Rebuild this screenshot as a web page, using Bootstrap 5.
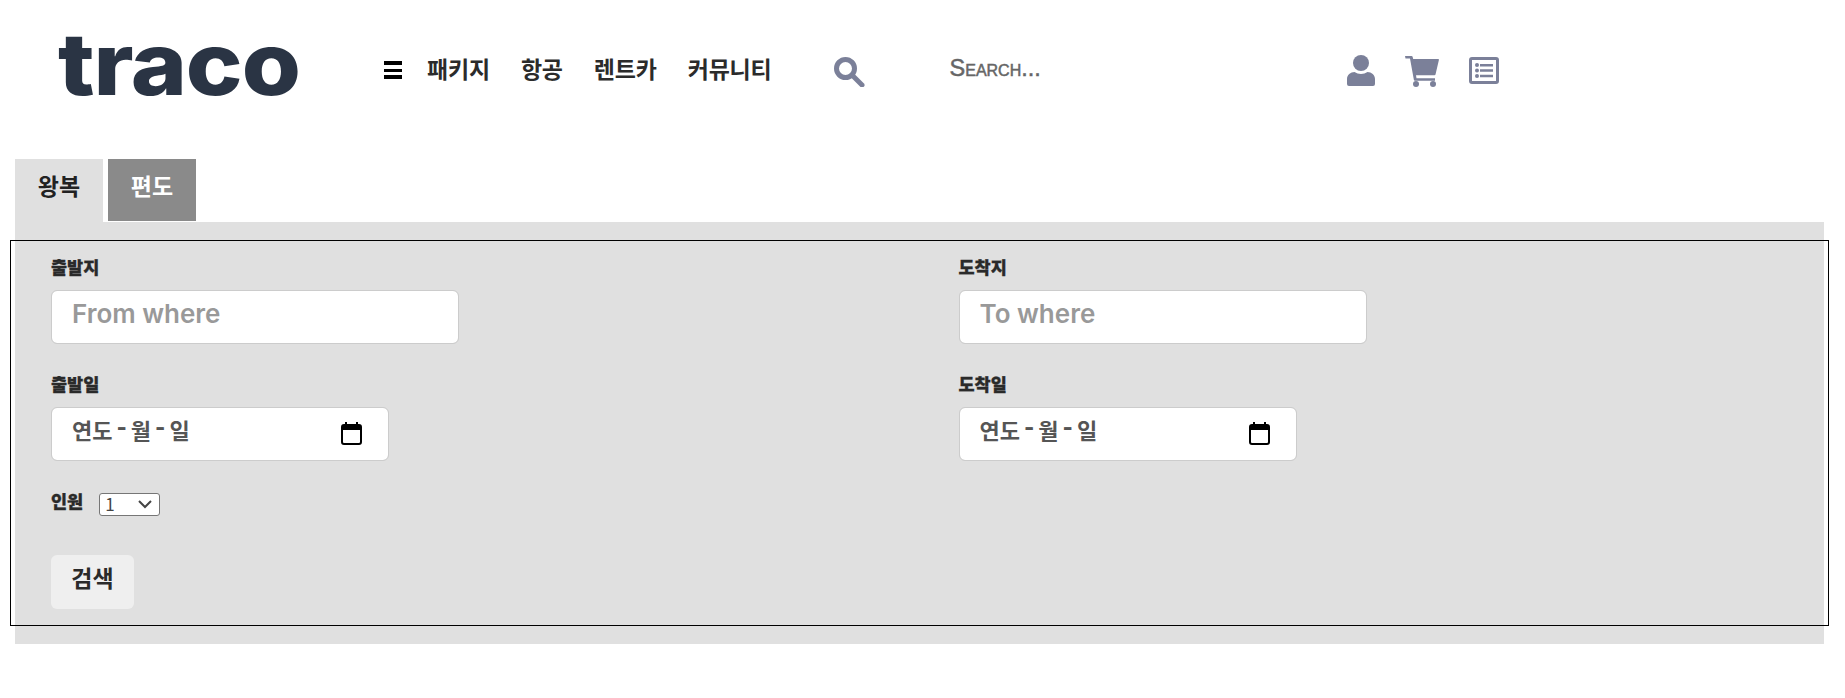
<!DOCTYPE html>
<html lang="ko">
<head>
    <title>traco</title>
    <link href="https://cdn.jsdelivr.net/npm/bootstrap@5.3.3/dist/css/bootstrap.min.css" rel="stylesheet">
    <style>
        body { font-family: "Noto Sans CJK KR", "Noto Sans", sans-serif; color: #222; background: #fff; overflow-x: hidden; }

        /* header */
        .top-bar { height: 140px; padding-left: 58px; }
        .brand-logo { width: 326px; font-family: Inter, sans-serif; font-weight: 800; font-size: 87px; line-height: 1; letter-spacing: -1px; color: #2a3444; text-decoration: none; position: relative; top: -7px; transform: scaleX(1.1); transform-origin: left center; }
        .menu-bars { width: 18px; height: 18px; margin-right: 25px; border-top: 4px solid #000; border-bottom: 4px solid #000; }
        .menu-bars::after { content: ""; display: block; height: 3px; margin-top: 3.5px; background: #000; }
        .menu-link { position: relative; top: -2px; font-size: 23px; font-weight: 700; line-height: 1; color: #2b2b2b; text-decoration: none; margin-right: 31px; letter-spacing: -.2px; }
        .menu-link.last { margin-right: 62px; }
        .find-icon { position: relative; top: 2px; }
        .search-text { position: relative; top: -1px; width: 397px; margin-left: 85px; font-family: "Liberation Sans", sans-serif; font-size: 23.5px; font-variant: small-caps; color: #666; -webkit-text-stroke: .5px #666; }
        .icon-tint { fill: #7b8099; }
        .cart-icon { position: relative; top: 1px; margin-left: 30px; }
        .list-icon { margin-left: 30px; }

        /* tabs */
        .tab-row { margin: 19px 0 0 15px; gap: 5px; }
        .tab-item { width: 88px; height: 62px; padding: 3px 0 0; border: 0; border-radius: 0; font-size: 23px; font-weight: 700; line-height: 1.4; text-align: center; }
        .tab-item.btn { display: block; }
        .tab-item.on { height: 63px; padding-bottom: 13px; background: #e0e0e0; color: #222; }
        .tab-item.off { padding-bottom: 12px; background: #8a8a8a; color: #fff; }

        /* search panel */
        .search-panel { margin: 0 21px 0 15px; padding: 18px 0; background: #e0e0e0; }
        .search-form { margin: 0 -5px; padding: 14px 0 16px; border: 1px solid #000; }
        .field-label { display: block; margin-bottom: 11px; font-size: 17.5px; font-weight: 900; line-height: 24px; color: #2a2a2a; -webkit-text-stroke: .3px #2a2a2a; }
        .place-input.form-control { width: 408px; height: 54px; padding: 0 20px 7px; border: 1px solid #ccc; border-radius: 6px; font-family: Inter, sans-serif; font-size: 26px; font-weight: 600; }
        .place-input.form-control::placeholder { color: #999; opacity: 1; }
        .date-box.form-control { width: 338px; height: 54px; margin-bottom: 30px; padding: 0 26px 0 20px; border: 1px solid #ccc; border-radius: 6px; font-size: 22px; font-weight: 700; color: #555; }
        .date-box span { position: relative; top: -4px; }
        .date-box svg { position: relative; top: -1px; }
        .date-dash { padding: 0 4px; font-family: Inter, sans-serif; font-weight: 800; }
        .place-gap { margin-bottom: 28px; }
        .field-shift { margin-left: -1px; }
        .people-row { height: 24px; gap: 16px; }
        .people-row .field-label { margin: -2px 0 0; }
        .people-select { width: 61px; height: 23px; margin-top: 2px; padding: 0 0 2px 5px; appearance: none; border: 1px solid #767676; border-radius: 3px; background: #fff url("data:image/svg+xml,%3Csvg xmlns='http://www.w3.org/2000/svg' width='14' height='9'%3E%3Cpath d='M1 1l6 6 6-6' fill='none' stroke='%23444' stroke-width='2'/%3E%3C/svg%3E") no-repeat right 7px center; color: #444; font-family: "Noto Sans CJK KR", sans-serif; font-size: 17px; line-height: 1; }
        .go-btn.btn { display: block; width: 83px; height: 54px; margin-top: 40px; padding: 0 0 10px; border: 0; border-radius: 6px; background: #efefef; color: #2a2a2a; font-size: 23px; font-weight: 700; }
        .field-col { padding-left: 40px; }
    </style>
</head>
<body>
    <!-- header -->
    <header class="top-bar d-flex align-items-center">
        <a class="brand-logo" href="#">traco</a>
        <span class="menu-bars"></span>
        <a class="menu-link" href="#">패키지</a>
        <a class="menu-link" href="#">항공</a>
        <a class="menu-link" href="#">렌트카</a>
        <a class="menu-link last" href="#">커뮤니티</a>
        <svg class="find-icon" width="31" height="30" viewBox="0 0 31 30"><circle cx="11.500" cy="11.500" r="9" fill="none" stroke="#7b8099" stroke-width="5"/><path d="M19 19l9 9" stroke="#7b8099" stroke-width="5" stroke-linecap="round"/></svg>
        <span class="search-text">Search...</span>
        <svg class="icon-tint" width="28" height="31" viewBox="0 0 28 31"><circle cx="14" cy="8" r="8"/><path d="M0 24c0-4 3.500-7 7.500-7 2 1.300 4 2 6.500 2s4.500-.7 6.500-2c4 0 7.500 3 7.500 7v5a2 2 0 0 1-2 2H2a2 2 0 0 1-2-2z"/></svg>
        <svg class="cart-icon icon-tint" width="34" height="31" viewBox="0 0 34 31"><path d="M0 0h6.500c.6 0 1 .3 1.100.8L8.200 3H33c.7 0 1 .4.900 1l-3.400 14.500c-.1.500-.5.800-1 .8H11l.5 3H30v2.500H10c-.6 0-1-.3-1.100-.8L5 2.500H.5z"/><circle cx="11" cy="28" r="3"/><circle cx="28" cy="28" r="3"/></svg>
        <svg class="icon-tint list-icon" width="30" height="27" viewBox="0 0 30 27"><path fill-rule="evenodd" d="M3 0h24a3 3 0 0 1 3 3v21a3 3 0 0 1-3 3H3a3 3 0 0 1-3-3V3a3 3 0 0 1 3-3zm0 3v21h24V3z"/><circle cx="8" cy="8" r="2"/><circle cx="8" cy="13.500" r="2"/><circle cx="8" cy="19" r="2"/><path d="M11 7h13v2.500H11zM11 12.300h13v2.500H11zM11 17.800h13v2.500H11z"/></svg>
    </header>

    <!-- tabs -->
    <div class="tab-row d-flex align-items-start">
        <button class="tab-item on btn" type="button">왕복</button>
        <button class="tab-item off btn" type="button">편도</button>
    </div>

    <!-- search form -->
    <div class="search-panel">
        <form class="search-form">
            <div class="row g-0">
                <div class="col-6 field-col">
                    <label class="field-label">출발지</label>
                    <input class="place-input form-control place-gap" type="text" placeholder="From where">
                    <label class="field-label">출발일</label>
                    <div class="date-box form-control d-flex align-items-center justify-content-between">
                        <span>연도<span class="date-dash">-</span>월<span class="date-dash">-</span>일</span>
                        <svg width="21" height="23" viewBox="0 0 21 23"><path d="M5 0v3M16 0v3" stroke="#000" stroke-width="2"/><rect x="1" y="3" width="19" height="19" rx="2" fill="none" stroke="#000" stroke-width="2"/><path d="M1 4h19v4H1z"/></svg>
                    </div>
                </div>
                <div class="col-6 field-col">
                    <div class="field-shift">
                        <label class="field-label">도착지</label>
                        <input class="place-input form-control place-gap" type="text" placeholder="To where">
                        <label class="field-label">도착일</label>
                        <div class="date-box form-control d-flex align-items-center justify-content-between">
                            <span>연도<span class="date-dash">-</span>월<span class="date-dash">-</span>일</span>
                            <svg width="21" height="23" viewBox="0 0 21 23"><path d="M5 0v3M16 0v3" stroke="#000" stroke-width="2"/><rect x="1" y="3" width="19" height="19" rx="2" fill="none" stroke="#000" stroke-width="2"/><path d="M1 4h19v4H1z"/></svg>
                        </div>
                    </div>
                </div>
            </div>
            <div class="field-col">
                <div class="people-row d-flex align-items-start">
                    <label class="field-label">인원</label>
                    <select class="people-select">
                        <option>1</option>
                        <option>2</option>
                        <option>3</option>
                    </select>
                </div>
                <button class="go-btn btn" type="button">검색</button>
            </div>
        </form>
    </div>
</body>
</html>
